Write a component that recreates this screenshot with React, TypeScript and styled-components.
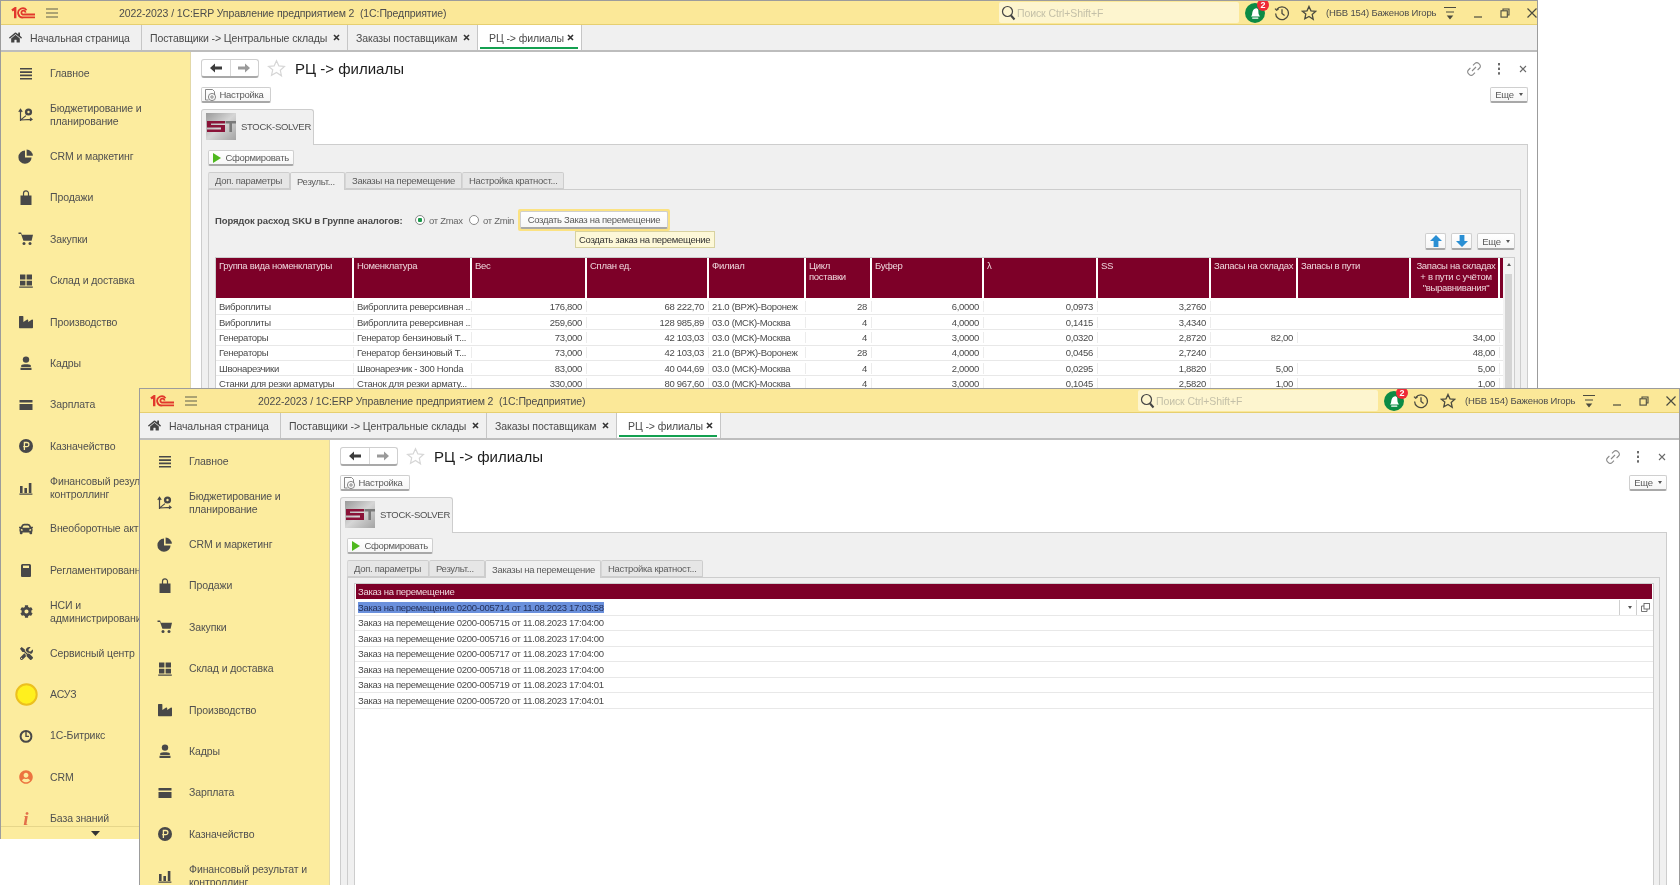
import React from "react";
import styled, { createGlobalStyle, css } from "styled-components";
import { FaHome, FaCar, FaCog, FaTools, FaUserCircle, FaIndustry } from "react-icons/fa";

const Global = createGlobalStyle`
  * { box-sizing: border-box; }
  html, body { margin: 0; padding: 0; background: #fff; overflow: hidden; }
  body { font-family: "Liberation Sans", Arial, sans-serif; }
`;

const small = css`
  font-size: 9.5px;
  letter-spacing: -0.3px;
`;

const medium = css`
  font-size: 10.5px;
  letter-spacing: -0.1px;
`;

const Desktop = styled.div`
  position: relative;
  width: 1680px;
  height: 885px;
  overflow: hidden;
  background: #fff;
  filter: blur(0.3px);
`;

const Win = styled.div<{ $x: number; $y: number; $w: number; $h: number; $inset: number }>`
  position: absolute;
  left: ${(p) => p.$x}px;
  top: ${(p) => p.$y}px;
  width: ${(p) => p.$w}px;
  height: ${(p) => p.$h}px;
  --inset: ${(p) => p.$inset}px;
  display: flex;
  flex-direction: column;
  overflow: hidden;
  background: #fff;
  border: 1px solid #9c9c9c;
  border-bottom: none;
`;

const TitleBar = styled.div`
  flex: none;
  height: 24px;
  display: flex;
  align-items: center;
  background: #fbe898;
  border-bottom: 1px solid #e6cf70;
  color: #4c4c4c;
  padding-right: var(--inset);
`;

const LogoSlot = styled.svg`
  margin-left: 10px;
  flex: none;
`;

const Burger = styled.svg`
  margin-left: 10px;
  flex: none;
`;

const AppTitle = styled.div`
  margin-left: 60px;
  white-space: pre;
  ${medium}
`;

const TitleRight = styled.div`
  margin-left: auto;
  display: flex;
  align-items: center;
`;

const Search = styled.div`
  width: 240px;
  height: 21px;
  background: #fdf5cf;
  border-radius: 2px;
  display: flex;
  align-items: center;
  padding-left: 2px;
  gap: 1px;
  color: #c4c0a8;
  ${medium}
`;

const Bell = styled.div`
  position: relative;
  margin-left: 6px;
  width: 20px;
  height: 20px;
  border-radius: 50%;
  background: #0c8b45;
  display: flex;
  align-items: center;
  justify-content: center;
`;

const Badge = styled.span`
  position: absolute;
  right: -4px;
  top: -4px;
  width: 12px;
  height: 12px;
  border-radius: 50%;
  background: #ee2a36;
  color: #fff;
  font-size: 9px;
  font-weight: bold;
  line-height: 12px;
  text-align: center;
`;

const TitleIcon = styled.svg<{ $ml: number }>`
  margin-left: ${(p) => p.$ml}px;
  flex: none;
`;

const UserName = styled.div`
  margin-left: 9px;
  width: 110px;
  white-space: nowrap;
  color: #4c4c4c;
  ${small}
  letter-spacing: -0.15px;
`;

const TabStrip = styled.div`
  flex: none;
  height: 27px;
  display: flex;
  background: #f0f0f0;
  border-bottom: 2px solid #bdbdbd;
`;

const Tab = styled.div<{ $w: number; $active?: boolean; $pad: number }>`
  position: relative;
  flex: none;
  width: ${(p) => p.$w}px;
  height: 25px;
  display: flex;
  align-items: center;
  padding-left: ${(p) => p.$pad}px;
  padding-right: 7px;
  justify-content: space-between;
  border-right: 1px solid #c6c6c6;
  background: ${(p) => (p.$active ? "#fff" : "#f0f0f0")};
  color: #4a4a4a;
  white-space: nowrap;
  ${medium}
`;

const TabUnderline = styled.span`
  position: absolute;
  left: 2px;
  right: 3px;
  bottom: 1px;
  height: 2px;
  background: #14a050;
`;

const HomeWrap = styled.span`
  display: flex;
  align-items: center;
  gap: 8px;
`;

const Body = styled.div`
  flex: 1;
  min-height: 0;
  display: flex;
`;

const Sidebar = styled.div`
  flex: none;
  width: 190px;
  display: flex;
  flex-direction: column;
  background: #fcec9e;
  border-right: 1px solid #e2d8a8;
`;

const SideList = styled.div`
  flex: 1;
  min-height: 0;
  overflow: hidden;
  padding-top: 1px;
`;

const SideItem = styled.div`
  height: 41.4px;
  display: flex;
  align-items: center;
`;

const SideIcon = styled.div`
  flex: none;
  width: 50px;
  margin-right: -1px;
  display: flex;
  justify-content: center;
  color: #484848;
`;

const SideLabel = styled.div`
  line-height: 13px;
  color: #505050;
  white-space: pre;
  ${medium}
`;

const SideFoot = styled.div`
  flex: none;
  height: 13px;
  border-top: 1px solid #e6d68a;
  display: flex;
  justify-content: center;
  align-items: center;
`;

const InfoGlyph = styled.span`
  font-family: "Liberation Serif", serif;
  font-style: italic;
  font-weight: bold;
  font-size: 19px;
  line-height: 16px;
  color: #e2704a;
`;

const Content = styled.div`
  flex: 1;
  min-width: 0;
  padding: 0 calc(9px + var(--inset)) 0 10px;
  display: flex;
  flex-direction: column;
  overflow: hidden;
`;

const FormHead = styled.div`
  flex: none;
  margin-top: 7px;
  height: 19px;
  display: flex;
  align-items: center;
`;

const NavGroup = styled.div`
  width: 58px;
  height: 19px;
  display: flex;
  border: 1px solid #cfcfcf;
  border-bottom: 2px solid #a9a9a9;
  border-radius: 3px;
  background: #fff;
`;

const NavCell = styled.div`
  flex: 1;
  display: flex;
  align-items: center;
  justify-content: center;
  & + & {
    border-left: 1px solid #d8d8d8;
  }
`;

const FormTitle = styled.div`
  margin-left: 9px;
  font-size: 15px;
  color: #1c1c1c;
  white-space: pre;
`;

const HeadTools = styled.div`
  margin-left: auto;
  margin-right: 1px;
  display: flex;
  align-items: center;
  gap: 16px;
  & > svg:last-child {
    margin-left: 2px;
  }
`;

const SettingsRow = styled.div`
  flex: none;
  margin-top: 9px;
  display: flex;
  justify-content: space-between;
`;

const Btn = styled.div<{ $w?: number; $h?: number }>`
  flex: none;
  width: ${(p) => (p.$w ? `${p.$w}px` : "auto")};
  height: ${(p) => p.$h ?? 16}px;
  display: flex;
  align-items: center;
  justify-content: center;
  gap: 2px;
  background: linear-gradient(#fff, #f6f6f6);
  border: 1px solid #cfcfcf;
  border-bottom: 2px solid #a8a8a8;
  border-radius: 2px;
  color: #5a5a5a;
  white-space: nowrap;
  ${small}
`;

const IconBtn = styled(Btn)`
  padding-right: 4px;
`;

const Caret = styled.span`
  width: 0;
  height: 0;
  margin-left: 3px;
  border-left: 2.5px solid transparent;
  border-right: 2.5px solid transparent;
  border-top: 3px solid #555;
`;

const GroupTab = styled.div`
  flex: none;
  position: relative;
  z-index: 1;
  margin-top: 6px;
  width: 113px;
  height: 36px;
  display: flex;
  align-items: center;
  gap: 5px;
  padding: 0 0 2px 4px;
  background: #f0f0f0;
  border: 1px solid #cdcdcd;
  border-bottom: none;
  border-radius: 3px 3px 0 0;
  color: #505050;
  white-space: nowrap;
  ${small}
`;

const GroupPanel = styled.div`
  flex: 1;
  min-height: 0;
  margin-top: -1px;
  padding: 5px 6px 0 6px;
  background: #f0f0f0;
  border: 1px solid #cdcdcd;
  border-bottom: none;
  display: flex;
  flex-direction: column;
`;

const PageTabs = styled.div`
  flex: none;
  margin-top: 6px;
  height: 18px;
  display: flex;
  position: relative;
  z-index: 1;
`;

const PageTab = styled.div<{ $w: number; $active?: boolean }>`
  width: ${(p) => p.$w}px;
  height: ${(p) => (p.$active ? 18 : 17)}px;
  display: flex;
  align-items: center;
  padding-left: 6px;
  color: #5c5c5c;
  white-space: nowrap;
  background: ${(p) => (p.$active ? "#f0f0f0" : "#e6e6e6")};
  border: 1px solid #cdcdcd;
  border-bottom: ${(p) => (p.$active ? "none" : "1px solid #cdcdcd")};
  border-left: ${(p) => (p.$active ? "1px solid #cdcdcd" : "1px solid #d6d6d6")};
  border-radius: 2px 2px 0 0;
  ${small}
`;

const PagePanel = styled.div`
  flex: 1;
  min-height: 0;
  margin-top: -1px;
  padding: 0 5px 0 6px;
  border: 1px solid #cdcdcd;
  border-bottom: none;
  display: flex;
  flex-direction: column;
  position: relative;
`;

const OptionRow = styled.div`
  flex: none;
  margin-top: 19px;
  height: 22px;
  display: flex;
  align-items: center;
  color: #666;
  ${small}
`;

const OptionLabel = styled.span`
  font-weight: bold;
  color: #4a4a4a;
  width: 200px;
  white-space: nowrap;
  letter-spacing: -0.12px;
`;

const Radio = styled.span<{ $on?: boolean }>`
  width: 10px;
  height: 10px;
  border-radius: 50%;
  background: ${(p) => (p.$on ? "radial-gradient(#1c9a4c 0 2px, #fff 2.5px)" : "#fff")};
  border: 1px solid #8a8a8a;
  margin-right: 4px;
  flex: none;
`;

const RadioText = styled.span<{ $w: number }>`
  width: ${(p) => p.$w}px;
  white-space: nowrap;
`;

const FocusRing = styled.div`
  width: 152px;
  height: 22px;
  padding: 2px 2px;
  background: #fbe282;
  border-radius: 2px;
`;

const Tooltip = styled.div`
  position: absolute;
  left: 366px;
  top: 41px;
  width: 140px;
  height: 17px;
  padding-left: 3px;
  display: flex;
  align-items: center;
  background: #fdf8d8;
  border: 1px solid #d8d2a0;
  color: #333;
  white-space: nowrap;
  z-index: 2;
  ${small}
`;

const TableTools = styled.div`
  flex: none;
  margin-top: 2px;
  height: 17px;
  display: flex;
  justify-content: flex-end;
  gap: 5px;
`;

const Table = styled.div`
  flex: none;
  margin-top: 7px;
  width: 1300px;
  height: 200px;
  display: flex;
  background: #fff;
  border: 1px solid #cdcdcd;
`;

const TableMain = styled.div`
  flex: 1;
  min-width: 0;
`;

const cols = "138px 118px 115px 122px 97px 66px 112px 114px 113px 87px 113px 89px 3px";

const HeadRow = styled.div`
  display: grid;
  grid-template-columns: ${cols};
  height: 40px;
  margin-bottom: 1.5px;
`;

const HeadCell = styled.div<{ $center?: boolean }>`
  margin-right: 2px;
  padding: 2px 0 2px 3px;
  background: #7d0028;
  color: #eed6dc;
  line-height: 11px;
  text-align: ${(p) => (p.$center ? "center" : "left")};
  white-space: pre;
  overflow: hidden;
  ${small}
`;

const DataRow = styled.div`
  display: grid;
  grid-template-columns: ${cols};
  height: 15.4px;
  border-bottom: 1px solid #e8e8e8;
  align-items: center;
`;

const DataCell = styled.div<{ $right?: boolean }>`
  padding: 0 4px 0 3px;
  color: #4a4a4a;
  white-space: nowrap;
  overflow: hidden;
  text-align: ${(p) => (p.$right ? "right" : "left")};
  border-right: 1px solid #ececec;
  ${small}
`;

const VScroll = styled.div`
  flex: none;
  width: 11px;
  background: #f4f4f4;
  display: flex;
  flex-direction: column;
  align-items: center;
  padding-top: 5px;
`;

const ScrollUp = styled.span`
  width: 0;
  height: 0;
  border-left: 2.5px solid transparent;
  border-right: 2.5px solid transparent;
  border-bottom: 3px solid #555;
`;

const ScrollThumb = styled.span`
  margin-top: 8px;
  width: 7px;
  flex: 1;
  background: #d4d4d4;
`;

const OrderList = styled.div`
  margin-top: 5px;
  flex: 1;
  background: #fff;
  border: 1px solid #cdcdcd;
  border-bottom: none;
`;

const OrderHead = styled.div`
  height: 15px;
  margin: 0 1px 1px 1px;
  padding-left: 2px;
  display: flex;
  align-items: center;
  background: #7d0028;
  color: #eed6dc;
  ${small}
`;

const OrderRow = styled.div`
  height: 15.5px;
  display: flex;
  align-items: center;
  padding-left: 3px;
  border-bottom: 1px solid #e8e8e8;
  color: #4a4a4a;
  white-space: nowrap;
  ${small}
`;

const Selected = styled.span`
  background: #6a90dc;
  color: #23305a;
`;

const RowAction = styled.span<{ $first?: boolean }>`
  width: 17px;
  height: 100%;
  display: flex;
  align-items: center;
  justify-content: center;
  border-left: 1px solid #cfcfcf;
  margin-left: ${(p) => (p.$first ? "auto" : "0")};
`;

/* ---------- drawings ---------- */

const Logo1C = () => (
  <LogoSlot width="24" height="12" viewBox="0 0 24 12" fill="none" stroke="#e2382c">
    <path d="M1 3.5L4.2 1.2V11.2" strokeWidth="2.4" />
    <path d="M15.5 3.2A4.6 4.6 0 1 0 12.6 10.4H24" strokeWidth="1.8" />
    <path d="M14.4 5.6A2 2 0 1 0 12.8 7.5H24" strokeWidth="1.8" />
  </LogoSlot>
);

const BurgerIcon = () => (
  <Burger width="14" height="12" viewBox="0 0 14 12" stroke="#5f5f4c" strokeWidth="1.2">
    <path d="M1 2h12M1 6h12M1 10h12" />
  </Burger>
);

const SearchIcon = () => (
  <svg width="15" height="16" viewBox="0 0 15 16" fill="none" stroke="#444">
    <circle cx="6.5" cy="6.5" r="5" strokeWidth="1.2" />
    <path d="M10 10.5l3.5 4" strokeWidth="2" />
  </svg>
);

const BellGlyph = () => (
  <svg width="14" height="14" viewBox="0 0 14 14" fill="#fff">
    <path d="M3 10.5c1.4-1 1-3.4 1.6-5C5.4 3.2 7.5 2 9 2.4c1.4.3 1.4 2 1.4 3.6 0 2 .7 3.3 1.6 4.5z" />
    <rect x="4" y="11.4" width="6.5" height="1.4" rx=".7" />
  </svg>
);

const Clock = () => (
  <TitleIcon $ml={9} width="16" height="16" viewBox="0 0 16 16" fill="none" stroke="#4b4b3f" strokeWidth="1.3">
    <path d="M2.8 4.5A6.4 6.4 0 1 1 1.6 8.4" />
    <path d="M1 3.6l1.6 1.6L4.5 4" />
    <path d="M8 4.3V8.4l2.6 2" />
  </TitleIcon>
);

const StarOutline = ({ c = "#4b4b3f", s = 16, ml = 11 }: { c?: string; s?: number; ml?: number }) => (
  <TitleIcon $ml={ml} width={s} height={s} viewBox="0 0 16 16" fill="none" stroke={c} strokeWidth={s > 16 ? 1 : 1.3}>
    <path d="M8 1.4l2 4.4 4.7.5-3.5 3.2 1 4.7L8 11.4l-4.2 2.4 1-4.7L1.3 6.3 6 5.8z" />
  </TitleIcon>
);

const FilterMenu = () => (
  <TitleIcon $ml={7} width="14" height="15" viewBox="0 0 14 15" fill="none" stroke="#4b4b3f" strokeWidth="1.2">
    <path d="M1 2.5h12M3 7h8" />
    <path d="M5 11h4l-2 2.5z" fill="#4b4b3f" />
  </TitleIcon>
);

const WinMin = () => (
  <TitleIcon $ml={16} width="10" height="10" viewBox="0 0 10 10" stroke="#4b4b3f" strokeWidth="1.2">
    <path d="M1 9h8" />
  </TitleIcon>
);

const WinRestore = () => (
  <TitleIcon $ml={17} width="10" height="10" viewBox="0 0 10 10" fill="none" stroke="#4b4b3f" strokeWidth="1.1">
    <path d="M3 2.5V1h6v6H7.5" />
    <rect x="1" y="2.8" width="6.3" height="6.3" />
  </TitleIcon>
);

const WinClose = () => (
  <TitleIcon $ml={17} width="10" height="10" viewBox="0 0 10 10" stroke="#4b4b3f" strokeWidth="1.2">
    <path d="M.5.5l9 9M9.5.5l-9 9" />
  </TitleIcon>
);

const TabX = () => (
  <svg width="7" height="7" viewBox="0 0 7 7" stroke="#333" strokeWidth="1.6">
    <path d="M1 1l5 5M6 1L1 6" />
  </svg>
);

const ArrowLeft = ({ c }: { c: string }) => (
  <svg width="12" height="10" viewBox="0 0 12 10" fill={c}>
    <path d="M0 5l5-4.5V3.5h7v3H5v3z" />
  </svg>
);

const ArrowRight = ({ c }: { c: string }) => (
  <svg width="12" height="10" viewBox="0 0 12 10" fill={c}>
    <path d="M12 5L7 .5V3.5H0v3h7v3z" />
  </svg>
);

const LinkIcon = () => (
  <svg width="14" height="14" viewBox="0 0 14 14" fill="none" stroke="#8a8a8a" strokeWidth="1.1">
    <path d="M6 3.4l2-2a2.5 2.5 0 0 1 3.6 0l1 1a2.5 2.5 0 0 1 0 3.6l-2 2" />
    <path d="M8 10.6l-2 2a2.5 2.5 0 0 1-3.6 0l-1-1a2.5 2.5 0 0 1 0-3.6l2-2" />
    <path d="M5 9l4-4" />
  </svg>
);

const DotsIcon = () => (
  <svg width="4" height="12" viewBox="0 0 4 12" fill="#6a6a6a">
    <rect x="1" y="0" width="2" height="2.4" />
    <rect x="1" y="4.6" width="2" height="2.4" />
    <rect x="1" y="9.2" width="2" height="2.4" />
  </svg>
);

const CloseThin = () => (
  <svg width="8" height="8" viewBox="0 0 8 8" stroke="#6a6a6a" strokeWidth="1.1">
    <path d="M1 1l6 6M7 1L1 7" />
  </svg>
);

const GearDoc = () => (
  <svg width="13" height="14" viewBox="0 0 13 14" fill="none" stroke="#7a7a7a" strokeWidth=".9">
    <path d="M1.5 1.5h7l2 2V7M1.5 1.5V12h3" />
    <circle cx="8" cy="9" r="3.6" />
    <circle cx="8" cy="9" r="1.2" />
  </svg>
);

const StockLogo = () => (
  <svg width="30" height="27" viewBox="0 0 30 27">
    <defs>
      <linearGradient id="ssbg" x1="0" y1="0" x2="1" y2="1">
        <stop offset="0" stopColor="#9a9a9a" />
        <stop offset=".5" stopColor="#d6d6d6" />
        <stop offset="1" stopColor="#a4a4a4" />
      </linearGradient>
    </defs>
    <rect width="30" height="27" fill="url(#ssbg)" />
    <path d="M1 8h18v2.4H5v1.6h14v7H1v-2.4h14V14.4H1z" fill="#8a1338" />
    <path d="M19.5 8H30v2.4h-4V19h-2.6V10.4h-3.9z" fill="#7a7a7a" />
  </svg>
);

const Play = () => (
  <svg width="8" height="10" viewBox="0 0 8 10" fill="#4fb81f">
    <path d="M0 0l8 5-8 5z" />
  </svg>
);

const UpBlue = ({ flip }: { flip?: boolean }) => (
  <svg width="12" height="12" viewBox="0 0 12 12" fill="#2a8fd4" style={flip ? { transform: "scaleY(-1)" } : undefined}>
    <path d="M6 0l6 6H8.4v6H3.6V6H0z" />
  </svg>
);

const RestoreSmall = () => (
  <svg width="9" height="9" viewBox="0 0 9 9" fill="none" stroke="#666" strokeWidth=".9">
    <rect x="3" y=".5" width="5.5" height="5.5" />
    <path d="M3 3H.5v5.5H6V6" />
  </svg>
);

const I = (p: { children: React.ReactNode }) => (
  <svg width="16" height="16" viewBox="0 0 16 16" fill="#484848">
    {p.children}
  </svg>
);

const icons: Record<string, React.ReactNode> = {
  main: <I><path d="M2 2h12v1.6H2zM2 5.3h12v1.6H2zM2 8.6h12v1.6H2zM2 11.9h12v1.6H2z" /></I>,
  budget: (
    <I>
      <path d="M2.5 14V3M.8 4.8l1.7-2.4 1.7 2.4M2.5 13l11-.6M12 10.8l2 1.6-2 1.4M3 12.6l5-4" fill="none" stroke="#484848" strokeWidth="1.2" />
      <circle cx="10.5" cy="5" r="3.6" />
      <circle cx="10.5" cy="5" r="1.2" fill="#fcec9e" />
    </I>
  ),
  pie: (
    <I>
      <path d="M7 2.6A6.6 6.6 0 1 0 13.6 9.4H7z" />
      <path d="M8.6 1.6v6.2h6.2a6.2 6.2 0 0 0-6.2-6.2z" />
    </I>
  ),
  bag: (
    <I>
      <path d="M2.5 5.5h11V15h-11z" />
      <path d="M5.5 7V3.4a2.5 2.5 0 0 1 5 0V7" fill="none" stroke="#484848" strokeWidth="1.2" />
    </I>
  ),
  cart: (
    <I>
      <path d="M.5 1.5h2.6l.8 2.2H15l-1.4 6H5.4L3 3H.5z" />
      <circle cx="6" cy="12.6" r="1.5" />
      <circle cx="12" cy="12.6" r="1.5" />
    </I>
  ),
  grid: (
    <I>
      <path d="M2 1.5h5.4v5H2zM8.6 1.5H14v5H8.6zM2 7.7h5.4v4.8H2zM8.6 7.7H14v4.8H8.6zM1.2 13.6h13.6v1.2H1.2z" />
    </I>
  ),
  factory: <FaIndustry size={14} />,
  person: (
    <I>
      <circle cx="8" cy="4.6" r="3.2" />
      <path d="M3.2 10.2c1.4-1.2 8.2-1.2 9.6 0V12H3.2zM2.5 12.8h11V15h-11z" />
    </I>
  ),
  card: <I><path d="M1.5 3h13v2.6h-13zM1.5 7h13v6h-13z" /></I>,
  rub: (
    <I>
      <circle cx="8" cy="8" r="7" />
      <path d="M6.4 12V4.5h2.4a2 2 0 0 1 0 4.2H5.2" fill="none" stroke="#fcec9e" strokeWidth="1.3" />
    </I>
  ),
  bars: <I><path d="M2 6h2.6v7H2zM6.4 8h2.6v5H6.4zM10.8 3h2.6v10h-2.6zM1.4 13.6h13v1.2h-13z" /></I>,
  car: <FaCar size={14} />,
  doc: (
    <I>
      <path d="M3 3.5A1.5 1.5 0 0 1 4.5 2h7A1.5 1.5 0 0 1 13 3.5V14a1 1 0 0 1-1 1H4a1 1 0 0 1-1-1z" />
      <rect x="5" y="3.6" width="6" height="2.4" fill="#fcec9e" />
    </I>
  ),
  cog: <FaCog size={13} />,
  tools: <FaTools size={13} />,
  sun: (
    <svg width="23" height="23" viewBox="0 0 23 23">
      <circle cx="11.5" cy="11.5" r="10.2" fill="#fff01e" stroke="#ecc01e" strokeWidth="2" />
    </svg>
  ),
  ring: (
    <I>
      <circle cx="8" cy="8.4" r="5.4" fill="none" stroke="#484848" strokeWidth="2" />
      <path d="M8 3v5.4h3" fill="none" stroke="#484848" strokeWidth="1.4" />
    </I>
  ),
  user: <FaUserCircle size={14} color="#ec7440" />,
  info: <InfoGlyph>i</InfoGlyph>,
};

/* ---------- data ---------- */

const menu: [string, string][] = [
  ["main", "Главное"],
  ["budget", "Бюджетирование и\nпланирование"],
  ["pie", "CRM и маркетинг"],
  ["bag", "Продажи"],
  ["cart", "Закупки"],
  ["grid", "Склад и доставка"],
  ["factory", "Производство"],
  ["person", "Кадры"],
  ["card", "Зарплата"],
  ["rub", "Казначейство"],
  ["bars", "Финансовый результат и\nконтроллинг"],
  ["car", "Внеоборотные активы"],
  ["doc", "Регламентированный учет"],
  ["cog", "НСИ и\nадминистрирование"],
  ["tools", "Сервисный центр"],
  ["sun", "АСУЗ"],
  ["ring", "1С-Битрикс"],
  ["user", "CRM"],
  ["info", "База знаний"],
];

const headers = [
  "Группа вида номенклатуры",
  "Номенклатура",
  "Вес",
  "Сплан ед.",
  "Филиал",
  "Цикл\nпоставки",
  "Буфер",
  "λ",
  "SS",
  "Запасы на складах",
  "Запасы в пути",
];

const rows = [
  ["Виброплиты", "Виброплита реверсивная ...", "176,800", "68 222,70", "21.0 (ВРЖ)-Воронеж", "28", "6,0000", "0,0973", "3,2760", "", "", ""],
  ["Виброплиты", "Виброплита реверсивная ...", "259,600", "128 985,89", "03.0 (МСК)-Москва", "4", "4,0000", "0,1415", "3,4340", "", "", ""],
  ["Генераторы", "Генератор бензиновый Т...", "73,000", "42 103,03", "03.0 (МСК)-Москва", "4", "3,0000", "0,0320", "2,8720", "82,00", "", "34,00"],
  ["Генераторы", "Генератор бензиновый Т...", "73,000", "42 103,03", "21.0 (ВРЖ)-Воронеж", "28", "4,0000", "0,0456", "2,7240", "", "", "48,00"],
  ["Швонарезчики", "Швонарезчик - 300 Honda", "83,000", "40 044,69", "03.0 (МСК)-Москва", "4", "2,0000", "0,0295", "1,8820", "5,00", "", "5,00"],
  ["Станки для резки арматуры", "Станок для резки армату...", "330,000", "80 967,60", "03.0 (МСК)-Москва", "4", "3,0000", "0,1045", "2,5820", "1,00", "", "1,00"],
];

const leftCols = new Set([0, 1, 4]);

const orders = [
  "Заказ на перемещение 0200-005715 от 11.08.2023 17:04:00",
  "Заказ на перемещение 0200-005716 от 11.08.2023 17:04:00",
  "Заказ на перемещение 0200-005717 от 11.08.2023 17:04:00",
  "Заказ на перемещение 0200-005718 от 11.08.2023 17:04:00",
  "Заказ на перемещение 0200-005719 от 11.08.2023 17:04:01",
  "Заказ на перемещение 0200-005720 от 11.08.2023 17:04:01",
];

/* ---------- composed parts ---------- */

const Chrome = ({ sideCount, foot, children }: { sideCount: number; foot?: boolean; children: React.ReactNode }) => (
  <>
    <TitleBar>
      <Logo1C />
      <BurgerIcon />
      <AppTitle>{"2022-2023 / 1С:ERP Управление предприятием 2  (1С:Предприятие)"}</AppTitle>
      <TitleRight>
        <Search>
          <SearchIcon />
          Поиск Ctrl+Shift+F
        </Search>
        <Bell>
          <BellGlyph />
          <Badge>2</Badge>
        </Bell>
        <Clock />
        <StarOutline />
        <UserName>(НБВ 154) Баженов Игорь</UserName>
        <FilterMenu />
        <WinMin />
        <WinRestore />
        <WinClose />
      </TitleRight>
    </TitleBar>
    <TabStrip>
      <Tab $w={141} $pad={8}>
        <HomeWrap>
          <FaHome size={13} color="#444" />
          Начальная страница
        </HomeWrap>
      </Tab>
      <Tab $w={206} $pad={8}>
        Поставщики -&gt; Центральные склады
        <TabX />
      </Tab>
      <Tab $w={130} $pad={8}>
        Заказы поставщикам
        <TabX />
      </Tab>
      <Tab $w={104} $pad={11} $active>
        РЦ -&gt; филиалы
        <TabX />
        <TabUnderline />
      </Tab>
    </TabStrip>
    <Body>
      <Sidebar>
        <SideList>
          {menu.slice(0, sideCount).map(([k, label]) => (
            <SideItem key={k}>
              <SideIcon>{icons[k]}</SideIcon>
              <SideLabel>{label}</SideLabel>
            </SideItem>
          ))}
        </SideList>
        {foot && (
          <SideFoot>
            <svg width="9" height="5" viewBox="0 0 9 5" fill="#333">
              <path d="M0 0h9L4.5 5z" />
            </svg>
          </SideFoot>
        )}
      </Sidebar>
      <Content>
        <FormHead>
          <NavGroup>
            <NavCell><ArrowLeft c="#3c3c3c" /></NavCell>
            <NavCell><ArrowRight c="#9a9a9a" /></NavCell>
          </NavGroup>
          <StarOutline c="#d6d6d6" s={19} ml={8} />
          <FormTitle>РЦ -&gt; филиалы</FormTitle>
          <HeadTools>
            <LinkIcon />
            <DotsIcon />
            <CloseThin />
          </HeadTools>
        </FormHead>
        <SettingsRow>
          <IconBtn $w={70}>
            <GearDoc />
            Настройка
          </IconBtn>
          <Btn $w={38}>
            Еще
            <Caret />
          </Btn>
        </SettingsRow>
        <GroupTab>
          <StockLogo />
          STOCK-SOLVER
        </GroupTab>
        <GroupPanel>
          <Btn $w={86}>
            <Play />
            &nbsp;Сформировать
          </Btn>
          {children}
        </GroupPanel>
      </Content>
    </Body>
  </>
);

const ResultPage = () => (
  <>
    <PageTabs>
      <PageTab $w={82}>Доп. параметры</PageTab>
      <PageTab $w={55} $active>Результ...</PageTab>
      <PageTab $w={117}>Заказы на перемещение</PageTab>
      <PageTab $w={102}>Настройка кратност...</PageTab>
    </PageTabs>
    <PagePanel>
      <OptionRow>
        <OptionLabel>Порядок расход SKU в Группе аналогов:</OptionLabel>
        <Radio $on />
        <RadioText $w={40}>от Zmax</RadioText>
        <Radio />
        <RadioText $w={35}>от Zmin</RadioText>
        <FocusRing>
          <Btn $h={18}>Создать Заказ на перемещение</Btn>
        </FocusRing>
      </OptionRow>
      <Tooltip>Создать заказ на перемещение</Tooltip>
      <TableTools>
        <Btn $w={21} $h={17}><UpBlue /></Btn>
        <Btn $w={21} $h={17}><UpBlue flip /></Btn>
        <Btn $w={38} $h={17}>
          Еще
          <Caret />
        </Btn>
      </TableTools>
      <Table>
        <TableMain>
          <HeadRow>
            {headers.map((h) => (
              <HeadCell key={h}>{h}</HeadCell>
            ))}
            <HeadCell $center>
              {'Запасы на складах\n+ в пути с учётом\n"выравнивания"'}
            </HeadCell>
            <HeadCell />
          </HeadRow>
          {rows.map((r, i) => (
            <DataRow key={i}>
              {r.map((c, j) => (
                <DataCell key={j} $right={!leftCols.has(j)}>
                  {c}
                </DataCell>
              ))}
            </DataRow>
          ))}
        </TableMain>
        <VScroll>
          <ScrollUp />
          <ScrollThumb />
        </VScroll>
      </Table>
    </PagePanel>
  </>
);

const OrdersPage = () => (
  <>
    <PageTabs>
      <PageTab $w={82}>Доп. параметры</PageTab>
      <PageTab $w={56}>Результ...</PageTab>
      <PageTab $w={116} $active>Заказы на перемещение</PageTab>
      <PageTab $w={102}>Настройка кратност...</PageTab>
    </PageTabs>
    <PagePanel>
      <OrderList>
        <OrderHead>Заказ на перемещение</OrderHead>
        <OrderRow>
          <Selected>Заказ на перемещение 0200-005714 от 11.08.2023 17:03:58</Selected>
          <RowAction $first>
            <Caret />
          </RowAction>
          <RowAction>
            <RestoreSmall />
          </RowAction>
        </OrderRow>
        {orders.map((o) => (
          <OrderRow key={o}>{o}</OrderRow>
        ))}
      </OrderList>
    </PagePanel>
  </>
);

export default function App() {
  return (
    <>
      <Global />
      <Desktop>
        <Win $x={0} $y={0} $w={1538} $h={839} $inset={0}>
          <Chrome sideCount={19} foot>
            <ResultPage />
          </Chrome>
        </Win>
        <Win $x={139} $y={388} $w={1541} $h={497} $inset={3}>
          <Chrome sideCount={11}>
            <OrdersPage />
          </Chrome>
        </Win>
      </Desktop>
    </>
  );
}
